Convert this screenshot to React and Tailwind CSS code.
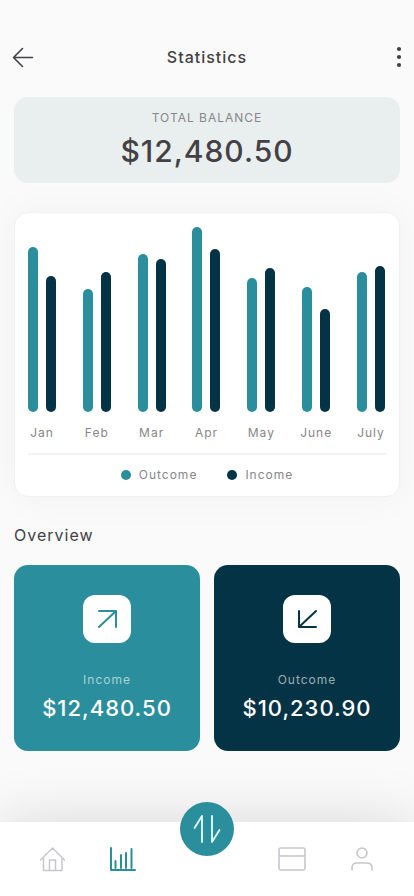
const months = [
  { name: "Jan", outcome: 165, income: 136 },
  { name: "Feb", outcome: 123, income: 140 },
  { name: "Mar", outcome: 158, income: 153 },
  { name: "Apr", outcome: 185, income: 163 },
  { name: "May", outcome: 134, income: 144 },
  { name: "June", outcome: 125, income: 103 },
  { name: "July", outcome: 140, income: 146 },
];

function Header() {
  return (
    <header className="flex h-6 items-center justify-between px-3">
      <button type="button" aria-label="Back" className="flex w-6">
        <svg width="22" height="22" viewBox="0 0 22 22" fill="none" stroke="#434145" strokeWidth="1.6" strokeLinecap="round" strokeLinejoin="round">
          <path d="M20.5 11.5H1.5M10.5 2.5L1.5 11.5L10.5 20.5" />
        </svg>
      </button>
      <h1 className="text-base font-medium tracking-[1px]">Statistics</h1>
      <button type="button" aria-label="More options" className="flex w-6 justify-end">
        <svg width="6" height="22" viewBox="0 0 6 22" fill="#434145">
          <circle cx="3" cy="3" r="2.1" />
          <circle cx="3" cy="11" r="2.1" />
          <circle cx="3" cy="19" r="2.1" />
        </svg>
      </button>
    </header>
  );
}

function Balance() {
  return (
    <section className="mt-7 flex flex-col items-center rounded-[14px] bg-[#e9eeee] pt-3 pb-3 tracking-[1px]">
      <h2 className="text-xs leading-[18px] text-[#88868a]">TOTAL BALANCE</h2>
      <p className="mt-1 text-3xl leading-10 font-medium">$12,480.50</p>
    </section>
  );
}

function Chart() {
  return (
    <section className="mt-[29px] rounded-[14px] border border-[#f1f1f1] bg-white px-[13px] pt-[14px] pb-[13px] text-xs tracking-[1px] text-[#88868a] shadow-[0_0_40px_rgba(0,0,0,0.04)]">
      <div className="flex items-end justify-between pr-px">
        {months.map((m) => (
          <div key={m.name} className="flex w-7 flex-col items-center">
            <div className="flex items-end gap-2">
              <div className="w-[10px] rounded-full bg-[#2b8e9d]" style={{ height: m.outcome }} />
              <div className="w-[10px] rounded-full bg-[#053346]" style={{ height: m.income }} />
            </div>
            <span className="mt-3 leading-[18px] whitespace-nowrap">{m.name}</span>
          </div>
        ))}
      </div>
      <div className="mt-[11px] flex justify-center gap-[30px] border-t-2 border-[#f3f3f3] pt-3 leading-[16px]">
        <span className="flex items-center gap-2">
          <i className="size-[10px] rounded-full bg-[#2b8e9d]" />
          Outcome
        </span>
        <span className="flex items-center gap-2">
          <i className="size-[10px] rounded-full bg-[#053346]" />
          Income
        </span>
      </div>
    </section>
  );
}

function Card({ label, amount, className, children }) {
  return (
    <div className={"flex flex-1 flex-col items-center rounded-[14px] pt-[30px] pb-7 tracking-[1px] " + className}>
      <div className="flex size-12 items-center justify-center rounded-xl bg-white">
        <svg width="20" height="20" viewBox="0 0 20 20" fill="none" stroke="currentColor" strokeWidth="2" strokeLinecap="round" strokeLinejoin="round">
          {children}
        </svg>
      </div>
      <h3 className="mt-7 text-xs leading-[18px] text-white/60">{label}</h3>
      <p className="mt-1 text-[22px] leading-[30px] font-medium text-white">{amount}</p>
    </div>
  );
}

function NavButton({ label, children, active }) {
  return (
    <button type="button" aria-label={label} className={active ? "text-[#2b8e9d]" : "text-[#c8c6cf]"}>
      {children}
    </button>
  );
}

function BottomNav() {
  return (
    <nav className="mt-auto grid h-[74px] grid-cols-[1fr_1fr_100px_1fr_1fr] justify-items-center bg-white px-[17px] shadow-[0_0_60px_rgba(0,0,0,0.14)]">
      <NavButton label="Home">
        <svg width="26" height="26" viewBox="0 0 26 26" fill="none" stroke="currentColor" strokeWidth="1.5" strokeLinecap="round" strokeLinejoin="round">
          <path d="M1.500 14L13.500 2L25.500 14M4.500 11.500V24.500H23V11.500M10.500 24.500V14H16.500V24.500" />
        </svg>
      </NavButton>
      <NavButton label="Statistics" active>
        <svg width="28" height="26" viewBox="0 0 28 26" fill="none" stroke="currentColor" strokeWidth="2" strokeLinecap="round" strokeLinejoin="round">
          <path d="M3 2V24H27M7.500 15V22M13 9V22M18 7V22M23.500 3V22" />
        </svg>
      </NavButton>
      <button type="button" aria-label="Transfer" className="-mt-5 flex size-[54px] items-center justify-center rounded-full bg-[#2b8e9d]">
        <svg width="28" height="30" viewBox="0 0 28 30" fill="none" stroke="#e3ffff" strokeWidth="1.8" strokeLinecap="round" strokeLinejoin="round">
          <path d="M1.500 14L9 2V28M19 2V28L26.500 16" />
        </svg>
      </button>
      <NavButton label="Cards">
        <svg width="28" height="26" viewBox="0 0 28 26" fill="none" stroke="currentColor" strokeWidth="1.6">
          <rect x="1" y="2" width="26" height="22" rx="2" />
          <path d="M1 10H27" />
        </svg>
      </NavButton>
      <NavButton label="Profile">
        <svg width="24" height="26" viewBox="0 0 24 26" fill="none" stroke="currentColor" strokeWidth="1.6" strokeLinecap="round">
          <circle cx="12" cy="7" r="5" />
          <path d="M2 24V22Q2 17 7 17H17Q22 17 22 22V24" />
        </svg>
      </NavButton>
    </nav>
  );
}

export default function App() {
  return (
    <div className="flex min-h-screen flex-col overflow-hidden bg-[#fafafa] pt-[45px] font-[Inter,sans-serif] text-[#434145]">
      <Header />
      <main className="px-[14px] pb-6">
        <Balance />
        <Chart />
        <h2 className="mt-[26px] text-base leading-6 tracking-[1px]">Overview</h2>
        <div className="mt-[18px] flex gap-[14px]">
          <Card label="Income" amount="$12,480.50" className="bg-[#2b8e9d] text-[#2b8e9d]">
            <path d="M2 2H19V18M19 2L2 18" />
          </Card>
          <Card label="Outcome" amount="$10,230.90" className="bg-[#053346] text-[#053346]">
            <path d="M2 2V18H19M2 18L19 2" />
          </Card>
        </div>
      </main>
      <BottomNav />
    </div>
  );
}
